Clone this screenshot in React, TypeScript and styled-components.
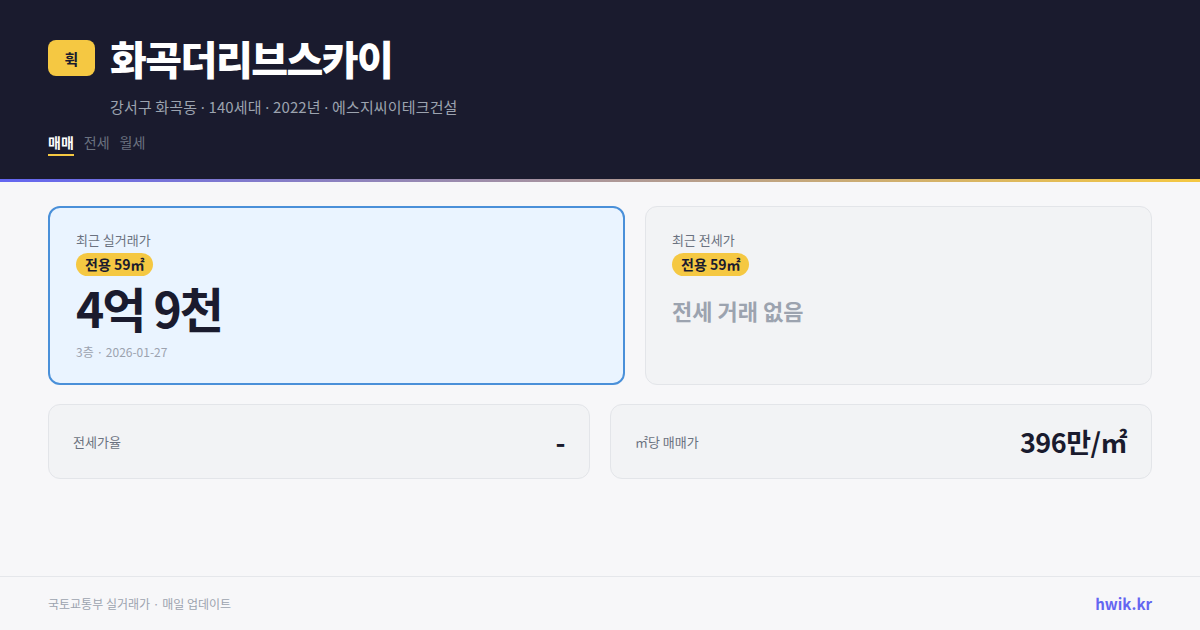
import React from "react";
import styled, { createGlobalStyle } from "styled-components";

const Global = createGlobalStyle`
  * { box-sizing: border-box; }
  html, body { margin: 0; padding: 0; }
  body {
    width: 1200px;
    height: 630px;
    overflow: hidden;
    background: #f7f7f9;
    font-family: "Noto Sans CJK KR", "Noto Sans", sans-serif;
  }
`;

const Page = styled.div`
  width: 1200px;
  height: 630px;
  display: flex;
  flex-direction: column;
  background: #f7f7f9;
`;

const Header = styled.header`
  background: #1a1b2e;
  padding: 38px 48px 0;
  height: 182px;
  border-bottom: 3px solid transparent;
  border-image: linear-gradient(90deg, #6366f1, #f5c842) 1;
`;

const TitleRow = styled.div`
  display: flex;
  align-items: center;
  gap: 15px;
`;

const Logo = styled.div`
  width: 47px;
  height: 36px;
  border-radius: 8px;
  background: #f5c842;
  color: #1a1b2e;
  font-weight: 700;
  font-size: 15px;
  display: flex;
  align-items: center;
  justify-content: center;
`;

const Title = styled.h1`
  margin: 0;
  color: #ffffff;
  font-size: 40px;
  font-weight: 900;
  letter-spacing: -1.5px;
  line-height: 40px;
`;

const Sub = styled.div`
  margin: 19px 0 0 62px;
  color: #9ca3af;
  font-size: 15px;
  line-height: 20px;
  letter-spacing: 0.15px;
`;

const Dot = styled.span`
  font-family: "Noto Sans", sans-serif;
`;

const Tabs = styled.div`
  display: flex;
  gap: 10px;
  margin-top: 15px;
`;

const Tab = styled.div<{ $active?: boolean }>`
  font-size: 14px;
  line-height: 20px;
  padding-bottom: 2px;
  color: ${(p) => (p.$active ? "#ffffff" : "#6b7280")};
  font-weight: ${(p) => (p.$active ? 700 : 400)};
  border-bottom: 2px solid ${(p) => (p.$active ? "#f5c842" : "transparent")};
`;

const Main = styled.main`
  flex: 1;
  padding: 24px 48px 0;
  display: flex;
  flex-direction: column;
  gap: 19px;
`;

const TopRow = styled.div`
  display: grid;
  grid-template-columns: 577px 1fr;
  gap: 20px;
`;

const BottomRow = styled.div`
  display: grid;
  grid-template-columns: 1fr 1fr;
  gap: 20px;
`;

const BigCard = styled.div<{ $primary?: boolean }>`
  height: 179px;
  border-radius: 12px;
  padding: ${(p) => (p.$primary ? "23px 26px" : "24px 26px")};
  background: ${(p) => (p.$primary ? "#eaf4ff" : "#f2f3f5")};
  border: ${(p) => (p.$primary ? "2px solid #4a90d9" : "1px solid #e3e5e9")};
  display: flex;
  flex-direction: column;
  align-items: flex-start;
`;

const Label = styled.div`
  font-size: 13px;
  line-height: 18px;
  color: #6b7280;
`;

const Badge = styled.span`
  margin-top: 4px;
  background: #f5c842;
  color: #1a1b2e;
  font-size: 14px;
  font-weight: 700;
  line-height: 23px;
  height: 23px;
  padding: 0 9px;
  border-radius: 12px;
`;

const Price = styled.div`
  margin-top: 3px;
  font-size: 48px;
  font-weight: 700;
  line-height: 56px;
  letter-spacing: -2px;
  color: #1a1b2e;
`;

const Meta = styled.div`
  margin-top: 9px;
  font-size: 12px;
  line-height: 16px;
  color: #9ca3af;
`;

const Empty = styled.div`
  margin-top: 19px;
  font-size: 22px;
  font-weight: 700;
  line-height: 30px;
  color: #9ca3af;
`;

const StatCard = styled.div`
  height: 75px;
  border-radius: 12px;
  background: #f2f3f5;
  border: 1px solid #e3e5e9;
  padding: 0 24px;
  display: flex;
  align-items: center;
  justify-content: space-between;
`;

const StatValue = styled.div`
  font-size: 27px;
  font-weight: 700;
  color: #1a1b2e;
  letter-spacing: -0.5px;
`;

const Footer = styled.footer`
  height: 54px;
  border-top: 1px solid #e5e7eb;
  padding: 0 48px;
  display: flex;
  align-items: center;
  justify-content: space-between;
`;

const FootNote = styled.div`
  font-size: 12px;
  color: #9ca3af;
`;

const Brand = styled.div`
  font-size: 15px;
  font-weight: 700;
  color: #6366f1;
`;

export default function App() {
  return (
    <>
      <Global />
      <Page>
        <Header>
          <TitleRow>
            <Logo>휙</Logo>
            <Title>화곡더리브스카이</Title>
          </TitleRow>
          <Sub>
            강서구 화곡동 <Dot>·</Dot> 140세대 <Dot>·</Dot> 2022년 <Dot>·</Dot> 에스지씨이테크건설
          </Sub>
          <Tabs>
            <Tab $active>매매</Tab>
            <Tab>전세</Tab>
            <Tab>월세</Tab>
          </Tabs>
        </Header>
        <Main>
          <TopRow>
            <BigCard $primary>
              <Label>최근 실거래가</Label>
              <Badge>전용 59㎡</Badge>
              <Price>4억 9천</Price>
              <Meta>3층 · 2026-01-27</Meta>
            </BigCard>
            <BigCard>
              <Label>최근 전세가</Label>
              <Badge>전용 59㎡</Badge>
              <Empty>전세 거래 없음</Empty>
            </BigCard>
          </TopRow>
          <BottomRow>
            <StatCard>
              <Label>전세가율</Label>
              <StatValue>-</StatValue>
            </StatCard>
            <StatCard>
              <Label>㎡당 매매가</Label>
              <StatValue>396만/㎡</StatValue>
            </StatCard>
          </BottomRow>
        </Main>
        <Footer>
          <FootNote>국토교통부 실거래가 · 매일 업데이트</FootNote>
          <Brand>hwik.kr</Brand>
        </Footer>
      </Page>
    </>
  );
}
